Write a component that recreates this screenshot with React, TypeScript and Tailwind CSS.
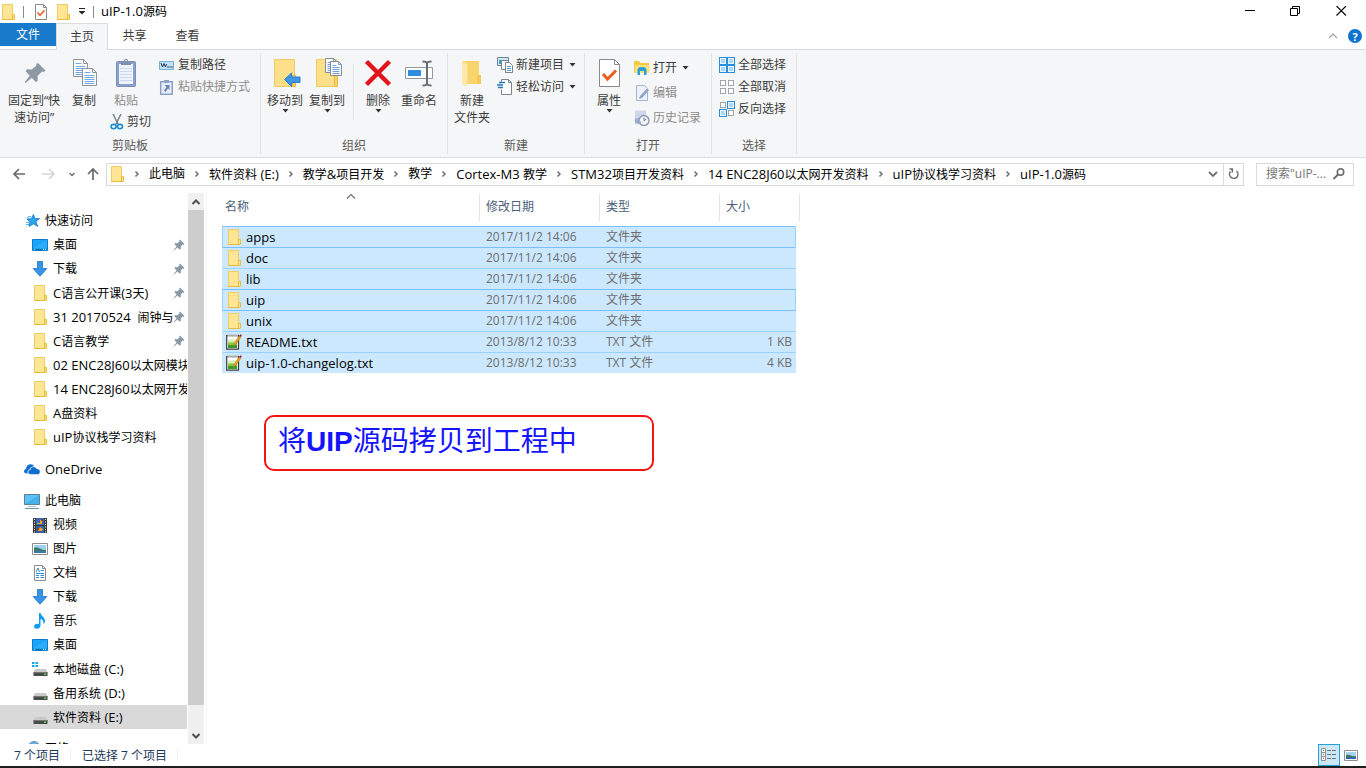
import React, { type ReactNode } from "react";

/* ---------- text ---------- */

// Latin runs are set one pixel larger than the Chinese text around them.
function Mixed({ children }: { children: string }) {
  const runs = children.match(/[\x20-\x7e]+|[^\x20-\x7e]+/g) ?? [];
  return (
    <span className="whitespace-pre">
      {runs.map((run, i) =>
        /^[\x20-\x7e]/.test(run) ? (
          <span key={i} className="text-[13px]">{run}</span>
        ) : (
          run
        ),
      )}
    </span>
  );
}

/* ---------- icons ---------- */

function Svg({ w, h, children }: { w: number; h: number; children: ReactNode }) {
  return (
    <svg width={w} height={h} viewBox={`0 0 ${w} ${h}`} className="shrink-0" aria-hidden="true">
      {children}
    </svg>
  );
}

const FolderIcon = () => (
  <Svg w={16} h={16}>
    <path d="M2 .5h11v9.500l1.500.5v5H2z" fill="#ffe594" />
    <path d="M2.500 15.500V.5h10v9.500" fill="none" stroke="#f0cd62" />
    <path d="M2 15.500h12M12.500 15v-4.500h2v5" fill="none" stroke="#e9bb3d" />
  </Svg>
);

const PinSmall = () => (
  <Svg w={12} h={12}>
    <path d="M7 .5 11.500 5l-1 .8-.8-.3-2 2 .2 2-1 1.200L4.600 8.400.8 11.600l-.4-.4 3.200-3.800-2.300-2.300 1.200-1 2 .2 2-2-.3-.8z" fill="#8b98a4" />
  </Svg>
);

const StarIcon = () => (
  <Svg w={16} h={16}>
    <path d="m9.500 1.500 1.300 4.200 4.700-.2-3.600 3 1.800 5-4.200-2.700L5 13.500l1-4.500-3-3 4.200-.2z" fill="#2ba6ee" stroke="#1580c4" strokeWidth=".9" />
    <path d="M4 3.500h3M2.500 5H5M2 9.500h3M2 11.500h3" stroke="#52b5ee" />
  </Svg>
);

const DesktopIcon = () => (
  <Svg w={16} h={16}>
    <path d="M.5 2.500h15v11H.5z" fill="#1ba4fb" stroke="#0a7dcb" />
    <path d="m1 11 14-8v8z" fill="#3cb4ff" opacity=".5" />
    <path d="M1 12.500h14" stroke="#0570b5" />
    <path d="M2 12.500h1M11 12.500h1M13 12.500h1" stroke="#fff" />
  </Svg>
);

const DownloadIcon = () => (
  <Svg w={16} h={16}>
    <path d="M5.500.5h5v7h4.300L8 15.300 1.200 7.500h4.300z" fill="#3a94e6" stroke="#2a7cc9" strokeWidth=".9" />
  </Svg>
);

const OneDriveIcon = () => (
  <Svg w={16} h={16}>
    <path d="M3.600 12.500H2.500C.8 12.500 0 11.400 0 10.200c0-1.300 1-2.200 2-2.300C2.200 5 4.300 3.300 6.600 3.300c1.800 0 3 .9 3.700 2-2.300-.2-4 1.200-4.400 3C4.200 8.500 3 10.400 3.600 12.500z" fill="#0f6fd0" />
    <path d="M6.500 13.300c-1.500 0-2.300-1-2.300-2.200 0-1.200.9-2.100 2.200-2.200.1-1.900 1.600-3 3.200-3 1.400 0 2.500.8 3 2.100 1.900-.2 3.300 1 3.300 2.700 0 1.500-1 2.600-2.500 2.600z" fill="#0f6fd0" />
  </Svg>
);

const PcIcon = () => (
  <Svg w={16} h={16}>
    <path d="M.5 1.500h15v10H.5z" fill="#5dc2f5" stroke="#5a7f98" />
    <path d="m1 11 14-9v9z" fill="#33a6e8" opacity=".6" />
    <path d="M4 13.500h8" stroke="#b5cad8" />
    <path d="M1 15.500h14" stroke="#7694a8" />
  </Svg>
);

const VideoIcon = () => (
  <Svg w={16} h={16}>
    <path d="M1 1h14v15H1z" fill="#3b3b3b" />
    <path d="M4 1h8v7H4z" fill="#3968b8" />
    <path d="M4 9h8v7H4z" fill="#345da6" />
    <path d="M5 6h3V3h2v4H5zM6 14l2-4 3 2-1 2z" fill="#e8a926" />
    <path d="M9 2h2v2H9zM5 11h2v2H5z" fill="#a33b22" />
    <path d="M2.500 2v14M13.500 2v14" stroke="#fff" strokeDasharray="1 1.500" />
  </Svg>
);

const PictureIcon = () => (
  <Svg w={16} h={16}>
    <path d="M.5 2.500h15v11H.5z" fill="#fff" stroke="#8c8c8c" />
    <path d="M2 4h12v8H2z" fill="#9bd0f3" />
    <path d="M2 7c3-1 5 0 7 1s3 1 5 1v3H2z" fill="#3c7968" />
    <path d="M2 10h12v2H2z" fill="#3b78ab" />
  </Svg>
);

const DocumentIcon = () => (
  <Svg w={16} h={16}>
    <path d="M2.500.5h8l3 3v12h-11z" fill="#fff" stroke="#8d8d8d" />
    <path d="M10.500.5v3h3" fill="none" stroke="#8d8d8d" />
    <path d="m4 7 2-4 1.500 4M8.500 5.500H12M4 8.500h8M4 10.500h3M4 12.500h3M8.500 10.500H12M8.500 12.500H12" fill="none" stroke="#2b8bd6" />
  </Svg>
);

const MusicIcon = () => (
  <Svg w={16} h={16}>
    <path d="M7 0h1.500c.5 3 4.500 4 4.500 8 0 1.500-.7 2.500-1.500 3.200.5-3-1-4.700-3-5.200v6.500c0 2-1.800 3.300-3.700 3.300C3 15.800 2 15 2 13.600 2 12 3.700 10.800 5.500 10.800c.6 0 1 .1 1.500.3z" fill="#129df3" />
  </Svg>
);

const DriveIcon = ({ system = false }: { system?: boolean }) => (
  <Svg w={16} h={16}>
    <path d="m3 8 11 0 1.500 3h-14z" fill="#c9c9c9" />
    <path d="M1.500 11h14v4h-14z" fill="#4a4a4a" />
    <path d="M1.500 11.500h14" stroke="#777" />
    <path d="M12 12.500h2v1.500h-2z" fill="#43e04d" />
    {system && <path d="M0 1h2.500v2H0zM3.500 1H6v2H3.500zM0 4h2.500v2H0zM3.500 4H6v2H3.500z" fill="#12a8e6" />}
  </Svg>
);

const NetworkIcon = () => (
  <Svg w={16} h={16}>
    <circle cx="10" cy="6" r="5.500" fill="#62aede" stroke="#6f93ab" />
    <path d="M.5 6.500h9v6h-9z" fill="#58bdf2" stroke="#5a7f98" />
  </Svg>
);

const TextFileIcon = () => (
  <Svg w={16} h={16}>
    <path d="M.7 1.700h11.800v13.500H.7z" fill="#fff" stroke="#3b3b3b" strokeWidth="1.200" />
    <path d="M2 5.500h9v4.500H2z" fill="#d5efb4" />
    <path d="M2 8.500h9V12H2z" fill="#84c944" />
    <path d="M2 11h9v3H2z" fill="#3d9a2c" />
    <path d="M1.500 1.500h10.500" stroke="#fff" strokeWidth="2.500" />
    <path d="M1.500 1.500h10.500" stroke="#555" strokeWidth="2" strokeDasharray="1 1" />
    <path d="m7.500 12 .6-2.600 5-7.400 1.700 1.200-5 7.300z" fill="#f0a51f" stroke="#a56a11" strokeWidth=".5" />
    <path d="m13.200 1.800 1-1.500 1.700 1.200-1 1.500z" fill="#a3202a" />
  </Svg>
);

const CheckPage = () => (
  <Svg w={14} h={16}>
    <path d="M1.500.5h8l3 3v12h-11z" fill="#fff" stroke="#8a8a8a" />
    <path d="M9.500.5v3h3" fill="none" stroke="#8a8a8a" />
    <path d="m3.500 8.500 2.500 2.800 4.500-5" fill="none" stroke="#e8622c" strokeWidth="1.700" />
  </Svg>
);

const Chevron = ({ d, stroke = "#707070", sw = 1.5 }: { d: string; stroke?: string; sw?: number }) => (
  <Svg w={12} h={12}>
    <path d={d} fill="none" stroke={stroke} strokeWidth={sw} />
  </Svg>
);

const Caret = () => (
  <Svg w={7} h={4}>
    <path d="M.5 0h6l-3 3.500z" fill="#333" />
  </Svg>
);

const PinLarge = () => (
  <Svg w={28} h={30}>
    <path d="m18 5 7.500 7.500-1.800 1.400-1.700-.5-4.500 4.500.3 4.500-1.800 1.800-4.300-4.400L5.500 25l-.8-.8 5-6.500L5.500 13l1.800-1.700 4.500.3 4.700-4.200-.4-1.200z" fill="#8d98a2" />
  </Svg>
);

function PageLines({ x, y }: { x: number; y: number }) {
  return (
    <g transform={`translate(${x} ${y})`}>
      <path d="M.5.5h10l4 4v13H.5z" fill="#fff" stroke="#8a929a" />
      <path d="M10.500.5v4h4" fill="none" stroke="#8a929a" />
      <path d="M2.500 4.500h6M2.500 7.500h10M2.500 9.500h10M2.500 11.500h10M2.500 13.500h10M2.500 15.500h10" stroke="#74a8e6" />
    </g>
  );
}

const CopyIcon = () => (
  <Svg w={28} h={30}>
    <PageLines x={3} y={1} />
    <PageLines x={12} y={10} />
  </Svg>
);

const PasteIcon = () => (
  <Svg w={28} h={30}>
    <rect x="4.500" y="3.500" width="19" height="25" rx="1" fill="#8ba0c9" stroke="#7d90ba" />
    <path d="M7 6h14v20H7z" fill="#eef3fc" />
    <path d="M8 10.500h12M8 13.500h12M8 16.500h12M8 19.500h12M8 22.500h12" stroke="#ccd8ee" />
    <path d="M9 3h3c0-3 4-3 4 0h3v4H9z" fill="#8090b0" />
    <path d="M13 2.500h2" stroke="#eef3fc" />
  </Svg>
);

const CutIcon = () => (
  <Svg w={14} h={16}>
    <path d="M3 0 8.300 10.500M11 0 5.700 10.500" stroke="#79838b" strokeWidth="1.500" />
    <ellipse cx="3.600" cy="12.600" rx="2.500" ry="2.200" fill="none" stroke="#188bd6" strokeWidth="1.600" />
    <ellipse cx="10" cy="12.600" rx="2.500" ry="2.200" fill="none" stroke="#188bd6" strokeWidth="1.600" />
  </Svg>
);

const CopyPathIcon = () => (
  <Svg w={16} h={16}>
    <path d="M.5 4.500h14v8H.5z" fill="#bfe1f6" stroke="#7ab0d4" />
    <path d="m2 6 1.500 4L5 6.500 6.500 10 7.500 7" fill="none" stroke="#1e3a52" />
    <path d="M8.500 10h1M10.500 10h1M12.500 10h1" stroke="#1e3a52" strokeWidth="1.300" />
  </Svg>
);

const PasteShortcutIcon = () => (
  <Svg w={16} h={16}>
    <path d="M1.700 2.700h11.500v12.600H1.700z" fill="#e9effa" stroke="#8c9fc4" strokeWidth="1.500" />
    <path d="M5 1h5v3H5z" fill="#8c9fc4" />
    <path d="M5.500 6h5v5L9 9.500 6.500 13 5 11.500l2.500-3.500z" fill="#6d82b0" />
  </Svg>
);

const BigFolder = () => (
  <>
    <path d="M4.500 1.500h20v27h-20z" fill="#ffe08a" stroke="#eecb66" />
    <path d="M22.500 17.500h3v11h-3z" fill="#fbd25d" stroke="#e5b94a" />
  </>
);

const MoveToIcon = () => (
  <Svg w={34} h={30}>
    <g transform="translate(2 0)"><BigFolder /></g>
    <path d="m16.500 21.500 7-6.500v4h8.500v5.500h-8.500v4z" fill="#3f97e3" stroke="#2d7fc9" />
  </Svg>
);

const CopyToIcon = () => (
  <Svg w={34} h={30}>
    <g transform="translate(2 0)"><BigFolder /></g>
    {[[15, 0], [20, 3]].map(([x, y]) => (
      <g key={x} transform={`translate(${x} ${y})`}>
        <path d="M.5.500h8l3 3v11H.5z" fill="#fff" stroke="#838b93" />
        <path d="M8.500.5v3h3M2.500 4.500h4M2.500 6.500h7M2.500 8.500h7M2.500 10.500h7M2.500 12.500h7" fill="none" stroke="#6a9fd8" />
      </g>
    ))}
  </Svg>
);

const DeleteIcon = () => (
  <Svg w={28} h={30}>
    <path d="m2.500 3.500 23 23M25.500 3.500l-23 23" stroke="#e1141c" strokeWidth="4.500" />
  </Svg>
);

const RenameIcon = () => (
  <Svg w={34} h={30}>
    <path d="M3.500 9.500h27v11h-27z" fill="#fff" stroke="#929a9f" />
    <path d="M6 12h13v6H6z" fill="#2f8de0" />
    <path d="M25 4v23" stroke="#676d72" strokeWidth="2" />
    <path d="M20.500 3.500c3 0 4.500.5 4.500 2 0-1.500 1.500-2 4.500-2M20.500 27.500c3 0 4.500-.5 4.500-2 0 1.500 1.500 2 4.500 2" fill="none" stroke="#676d72" strokeWidth="2" />
  </Svg>
);

const NewFolderIcon = () => (
  <Svg w={28} h={30}>
    <path d="M4 3h17v14l2 1.500V26H4z" fill="#f9d36c" />
    <path d="m4 3 5.500 3v20L8 29l-4-3z" fill="#ffe9a8" />
    <path d="M19 17h4v9h-4z" fill="#f3c957" />
  </Svg>
);

const NewItemIcon = () => (
  <Svg w={16} h={16}>
    <path d="M.5.500h11v8H.5z" fill="#cfe8f6" stroke="#6c8796" />
    <path d="M2 3h4v4H2z" fill="#3b9fd1" />
    <path d="M4.500 3.500h7v9h-7z" fill="#fff" stroke="#7b858c" />
    <path d="M8.500 5.500h4l3 3v7h-7z" fill="#fff" stroke="#7b858c" />
    <path d="M10 9.500h4M10 11.500h4M10 13.500h4" stroke="#5c9bd8" />
  </Svg>
);

const EasyAccessIcon = () => (
  <Svg w={16} h={16}>
    <path d="M4.500 2.500V.5h7l3 3v12h-10v-5" fill="#fff" stroke="#7d868d" />
    <path d="M11.500.5v3h3" fill="none" stroke="#7d868d" />
    <path d="M2 3.500h6M0 6h6M1 8.500h5" stroke="#2577be" strokeWidth="1.300" />
  </Svg>
);

const PropertiesIcon = () => (
  <Svg w={28} h={30}>
    <path d="M4.500 1.500h15l5 5v22h-20z" fill="#fff" stroke="#8a8a8a" />
    <path d="M19.500 1.500v5h5" fill="none" stroke="#8a8a8a" />
    <path d="m8 16 4.500 5L21 12.500" fill="none" stroke="#f05c1e" strokeWidth="3" />
  </Svg>
);

const OpenIcon = () => (
  <Svg w={16} h={16}>
    <path d="M0 1h5l1.500 2H15v10H0z" fill="#f5c842" />
    <path d="M1.500 5h14v8h-15z" fill="#ffe07a" />
    <path d="M3.500 15V10.500c0-3 2-3.500 4.500-3.500s4.500.5 4.500 3.500V15H10v-4H6v4z" fill="#27a2dc" />
  </Svg>
);

const EditIcon = () => (
  <Svg w={16} h={16}>
    <path d="M2.500.5h8l3 3v12h-11z" fill="#edf1f9" stroke="#a7b3cf" />
    <path d="M5 14 6 11l7-7.500 2 1.800L8 13z" fill="#93a3c8" />
  </Svg>
);

const HistoryIcon = () => (
  <Svg w={16} h={16}>
    <path d="M1 .5h11v14H1z" fill="#cfd8ea" />
    <path d="M1 8h5v5H1z" fill="#aab9d7" />
    <circle cx="10" cy="10.500" r="5" fill="#f0f3f8" stroke="#8d99b4" strokeWidth="1.400" />
    <path d="M10 7.500v3.200l2.200-1.500" fill="none" stroke="#707d9c" />
    <path d="M1 9.500 4 13l3-1" fill="none" stroke="#94a3c4" strokeWidth="1.500" />
  </Svg>
);

function Squares({ on }: { on: boolean[] }) {
  return (
    <Svg w={16} h={16}>
      {on.map((active, i) => {
        const x = (i % 2) * 8;
        const y = Math.floor(i / 2) * 8;
        return active ? (
          <g key={i}>
            <rect x={x + 0.5} y={y + 0.5} width="7" height="7" fill="#eaf6ff" stroke="#2b8fdd" />
            <rect x={x + 2} y={y + 2} width="4" height="4" fill="#a9d8fa" />
          </g>
        ) : (
          <rect key={i} x={x + 1.5} y={y + 1.5} width="5" height="5" fill="#fff" stroke="#a5a5a5" />
        );
      })}
    </Svg>
  );
}

/* ---------- ribbon ---------- */

function BigButton({ icon, lines, width, arrow, disabled }: { icon: ReactNode; lines: string[]; width: string; arrow?: boolean; disabled?: boolean }) {
  return (
    <button type="button" disabled={disabled} className={`flex shrink-0 flex-col items-center pt-[5px] ${width} ${disabled ? "text-[#8d8d8d]" : "text-[#3c3c3c]"}`}>
      {icon}
      <span className="mt-1 flex flex-col items-center leading-[17px]">
        {lines.map((l) => <span key={l} className="whitespace-nowrap">{l}</span>)}
      </span>
      {arrow && <Caret />}
    </button>
  );
}

function SmallButton({ icon, label, arrow, disabled }: { icon: ReactNode; label: string; arrow?: boolean; disabled?: boolean }) {
  return (
    <button type="button" disabled={disabled} className={`flex h-[22px] items-center gap-[3px] whitespace-nowrap ${disabled ? "text-[#8d8d8d]" : "text-[#3c3c3c]"}`}>
      {icon}
      <span>{label}</span>
      {arrow && <span className="ml-[2px]"><Caret /></span>}
    </button>
  );
}

function Group({ label, width, children }: { label: string; width: string; children: ReactNode }) {
  return (
    <section aria-label={label} className={`my-[3px] flex shrink-0 flex-col border-r border-[#e1e2e4] ${width}`}>
      <div className="flex flex-1 items-start">{children}</div>
      <div className="h-4 text-center leading-4 text-[#5a5a5a]">{label}</div>
    </section>
  );
}

function Ribbon() {
  return (
    <div className="flex h-[108px] shrink-0 border-b border-[#dadbdc] bg-[#f5f6f7]">
      <Group label="剪贴板" width="w-[261px]">
        <BigButton width="w-[68px]" icon={<PinLarge />} lines={["固定到“快", "速访问”"]} />
        <BigButton width="w-8" icon={<CopyIcon />} lines={["复制"]} />
        <div className="ml-[10px] flex w-[44px] flex-col gap-[2px]">
          <BigButton width="w-8" icon={<PasteIcon />} lines={["粘贴"]} disabled />
          <SmallButton icon={<CutIcon />} label="剪切" />
        </div>
        <div className="ml-[5px] mt-px flex flex-col">
          <SmallButton icon={<CopyPathIcon />} label="复制路径" />
          <SmallButton icon={<PasteShortcutIcon />} label="粘贴快捷方式" disabled />
        </div>
      </Group>
      <Group label="组织" width="w-[187px]">
        <BigButton width="ml-[3px] w-[42px]" icon={<MoveToIcon />} lines={["移动到"]} arrow />
        <BigButton width="w-[42px]" icon={<CopyToIcon />} lines={["复制到"]} arrow />
        <div className="mx-[5px] mt-[11px] h-14 w-px bg-[#e1e2e4]" />
        <BigButton width="w-[38px]" icon={<DeleteIcon />} lines={["删除"]} arrow />
        <BigButton width="w-[44px]" icon={<RenameIcon />} lines={["重命名"]} />
      </Group>
      <Group label="新建" width="w-[137px]">
        <BigButton width="w-12" icon={<NewFolderIcon />} lines={["新建", "文件夹"]} />
        <div className="ml-px mt-px flex flex-col">
          <SmallButton icon={<NewItemIcon />} label="新建项目" arrow />
          <SmallButton icon={<EasyAccessIcon />} label="轻松访问" arrow />
        </div>
      </Group>
      <Group label="打开" width="w-[127px]">
        <BigButton width="w-12" icon={<PropertiesIcon />} lines={["属性"]} arrow />
        <div className="ml-px mt-1 flex flex-col gap-[3px]">
          <SmallButton icon={<OpenIcon />} label="打开" arrow />
          <SmallButton icon={<EditIcon />} label="编辑" disabled />
          <SmallButton icon={<HistoryIcon />} label="历史记录" disabled />
        </div>
      </Group>
      <Group label="选择" width="w-[85px]">
        <div className="ml-[7px] mt-px flex flex-col">
          <SmallButton icon={<Squares on={[true, true, true, true]} />} label="全部选择" />
          <SmallButton icon={<Squares on={[false, false, false, false]} />} label="全部取消" />
          <SmallButton icon={<Squares on={[false, true, true, false]} />} label="反向选择" />
        </div>
      </Group>
    </div>
  );
}

/* ---------- window chrome ---------- */

function TitleBar() {
  return (
    <header className="flex h-[23px] shrink-0 items-center justify-between">
      <div className="flex items-center">
        <FolderIcon />
        <span className="ml-[7px] h-3 w-px bg-[#8a8a8a]" />
        <button type="button" aria-label="属性" className="ml-[10px]"><CheckPage /></button>
        <button type="button" aria-label="新建文件夹" className="ml-[7px]"><FolderIcon /></button>
        <button type="button" aria-label="自定义快速访问工具栏" className="ml-[7px]">
          <Svg w={8} h={7}><path d="M1 .5h6" stroke="#222" /><path d="M.5 3h7L4 6.500z" fill="#222" /></Svg>
        </button>
        <span className="ml-[7px] h-3 w-px bg-[#8a8a8a]" />
        <h1 className="ml-[7px]"><Mixed>uIP-1.0源码</Mixed></h1>
      </div>
      <div className="flex self-stretch pr-[2px]">
        <button type="button" aria-label="最小化" className="flex w-[46px] items-center justify-center">
          <Svg w={11} h={11}><path d="M1 4.500h10" stroke="#000" /></Svg>
        </button>
        <button type="button" aria-label="向下还原" className="flex w-[46px] items-center justify-center">
          <Svg w={11} h={11}><path d="M.5 2.500h7v7h-7zM2.500 2.500v-2h7v7h-2" fill="none" stroke="#000" /></Svg>
        </button>
        <button type="button" aria-label="关闭" className="flex w-[46px] items-center justify-center">
          <Svg w={11} h={11}><path d="m.5 0 9.500 9.500M10 0 .5 9.500" stroke="#000" strokeWidth="1.100" /></Svg>
        </button>
      </div>
    </header>
  );
}

function TabRow() {
  return (
    <div className="flex h-[27px] shrink-0 border-b border-[#dadbdc] text-[#3c3c3c]">
      <button type="button" className="h-[23px] w-14 bg-[#1979ca] text-white">文件</button>
      <button type="button" className="-mb-px w-[52px] border-x border-t border-[#dadbdc] bg-[#f5f6f7]">主页</button>
      <button type="button" className="h-[25px] w-[53px]">共享</button>
      <button type="button" className="h-[25px] w-[53px]">查看</button>
      <div className="ml-auto flex h-[26px] items-center gap-[9px] pr-1">
        <button type="button" aria-label="最小化功能区"><Chevron d="m2 8 4-4 4 4" stroke="#a0a0a0" sw={1.2} /></button>
        <button type="button" aria-label="帮助" className="flex size-[14px] items-center justify-center rounded-full bg-[#0f74d0] text-[11px] font-bold leading-none text-white">?</button>
      </div>
    </div>
  );
}

const crumbs = ["此电脑", "软件资料 (E:)", "教学&项目开发", "教学", "Cortex-M3 教学", "STM32项目开发资料", "14 ENC28J60以太网开发资料", "uIP协议栈学习资料", "uIP-1.0源码"];

function AddressRow() {
  return (
    <div className="flex h-8 shrink-0 items-center pr-3">
      <button type="button" aria-label="后退" className="ml-3">
        <Svg w={14} h={14}><path d="M13 7H2m5-5L2 7l5 5" fill="none" stroke="#6a6a6a" strokeWidth="1.700" /></Svg>
      </button>
      <button type="button" aria-label="前进" className="ml-4" disabled>
        <Svg w={14} h={14}><path d="M0 7h12M7 2l5 5-5 5" fill="none" stroke="#d6d6d6" strokeWidth="1.700" /></Svg>
      </button>
      <button type="button" aria-label="最近浏览的位置" className="ml-[10px]"><Chevron d="M3.500 5 6 7.500 8.500 5" /></button>
      <button type="button" aria-label="上移" className="ml-2">
        <Svg w={14} h={14}><path d="M7 13V2M2 7l5-5 5 5" fill="none" stroke="#6a6a6a" strokeWidth="1.700" /></Svg>
      </button>
      <div className="ml-[6px] flex h-[23px] min-w-0 flex-1 items-center border border-[#d9d9d9] pl-[2px]">
        <FolderIcon />
        <nav aria-label="地址" className="flex min-w-0 flex-1 items-center whitespace-nowrap">
          {crumbs.map((c) => (
            <span key={c} className="flex items-center">
              <span className="flex w-6 justify-center"><Chevron d="m4.500 3.500 2.500 2.500L4.500 8.500" /></span>
              <a href="#" className="text-black"><Mixed>{c}</Mixed></a>
            </span>
          ))}
        </nav>
        <button type="button" aria-label="以前的位置" className="flex w-5 justify-center"><Chevron d="m2 4 4 4 4-4" sw={1.8} /></button>
        <button type="button" aria-label="刷新" className="flex w-5 items-center justify-center self-stretch border-l border-[#d9d9d9]">
          <Svg w={12} h={12}><path d="M2.500 3.500A4.200 4.200 0 1 0 8.500 3M1.500 1h2.800v3.500" fill="none" stroke="#6a6a6a" strokeWidth="1.500" /></Svg>
        </button>
      </div>
      <label className="ml-3 flex h-[23px] w-[98px] items-center border border-[#d9d9d9] pl-[9px]">
        <input aria-label="搜索" placeholder={'搜索"uIP-...'} className="w-[66px] bg-transparent outline-none placeholder:text-[#767676]" />
        <Svg w={14} h={14}><circle cx="8.500" cy="5" r="3.200" fill="none" stroke="#6a6a6a" strokeWidth="1.600" /><path d="m6 7.500-4.500 4.500" stroke="#6a6a6a" strokeWidth="1.800" /></Svg>
      </label>
    </div>
  );
}

/* ---------- navigation pane ---------- */

type NavItem = { label: string; icon: ReactNode; pinned?: boolean; active?: boolean };

const sections: { head: NavItem; items: NavItem[] }[] = [
  {
    head: { label: "快速访问", icon: <StarIcon /> },
    items: [
      { label: "桌面", icon: <DesktopIcon />, pinned: true },
      { label: "下载", icon: <DownloadIcon />, pinned: true },
      { label: "C语言公开课(3天)", icon: <FolderIcon />, pinned: true },
      { label: "31 20170524  闹钟与", icon: <FolderIcon />, pinned: true },
      { label: "C语言教学", icon: <FolderIcon />, pinned: true },
      { label: "02 ENC28J60以太网模块", icon: <FolderIcon /> },
      { label: "14 ENC28J60以太网开发", icon: <FolderIcon /> },
      { label: "A盘资料", icon: <FolderIcon /> },
      { label: "uIP协议栈学习资料", icon: <FolderIcon /> },
    ],
  },
  { head: { label: "OneDrive", icon: <OneDriveIcon /> }, items: [] },
  {
    head: { label: "此电脑", icon: <PcIcon /> },
    items: [
      { label: "视频", icon: <VideoIcon /> },
      { label: "图片", icon: <PictureIcon /> },
      { label: "文档", icon: <DocumentIcon /> },
      { label: "下载", icon: <DownloadIcon /> },
      { label: "音乐", icon: <MusicIcon /> },
      { label: "桌面", icon: <DesktopIcon /> },
      { label: "本地磁盘 (C:)", icon: <DriveIcon system /> },
      { label: "备用系统 (D:)", icon: <DriveIcon /> },
      { label: "软件资料 (E:)", icon: <DriveIcon />, active: true },
    ],
  },
  { head: { label: "网络", icon: <NetworkIcon /> }, items: [] },
];

function NavRow({ item, child }: { item: NavItem; child?: boolean }) {
  return (
    <a href="#" className={`flex h-6 items-center gap-[5px] text-black ${child ? "pl-8" : "pl-6"} ${item.active ? "bg-[#d9d9d9]" : ""}`}>
      {item.icon}
      <span className="min-w-0 flex-1"><Mixed>{item.label}</Mixed></span>
      {item.pinned && <span className="mr-[2px] shrink-0"><PinSmall /></span>}
    </a>
  );
}

function NavPane() {
  return (
    <aside className="flex w-[207px] shrink-0 border-r border-[#f5f5f5]">
      <nav aria-label="导航窗格" className="flex w-[187px] flex-col gap-2 overflow-hidden pt-[19px]">
        {sections.map((s) => (
          <div key={s.head.label} className="shrink-0">
            <NavRow item={s.head} />
            {s.items.map((it) => <NavRow key={it.label} item={it} child />)}
          </div>
        ))}
      </nav>
      <div className="ml-px mt-[3px] flex w-4 flex-col bg-[#f0f0f0]">
        <button type="button" aria-label="向上滚动" className="flex h-[17px] items-center justify-center"><Chevron d="m2.500 8 3.500-3.500L9.500 8" stroke="#505050" sw={2} /></button>
        <div className="flex-1 bg-[#cdcdcd]" />
        <div className="h-[22px]" />
        <button type="button" aria-label="向下滚动" className="flex h-[17px] items-center justify-center"><Chevron d="M2.500 4 6 7.500 9.500 4" stroke="#505050" sw={2} /></button>
      </div>
    </aside>
  );
}

/* ---------- file list ---------- */

type FileRow = { name: string; date: string; type: string; size?: string; outlined?: boolean };

const files: FileRow[] = [
  { name: "apps", date: "2017/11/2 14:06", type: "文件夹", outlined: true },
  { name: "doc", date: "2017/11/2 14:06", type: "文件夹" },
  { name: "lib", date: "2017/11/2 14:06", type: "文件夹" },
  { name: "uip", date: "2017/11/2 14:06", type: "文件夹", outlined: true },
  { name: "unix", date: "2017/11/2 14:06", type: "文件夹" },
  { name: "README.txt", date: "2013/8/12 10:33", type: "TXT 文件", size: "1 KB" },
  { name: "uip-1.0-changelog.txt", date: "2013/8/12 10:33", type: "TXT 文件", size: "4 KB" },
];

function FileTable() {
  return (
    <table className="w-[578px] table-fixed border-separate border-spacing-0">
      <colgroup>
        <col className="w-[258px]" />
        <col className="w-[120px]" />
        <col className="w-[120px]" />
        <col className="w-[76px]" />
        <col className="w-1" />
      </colgroup>
      <thead>
        <tr className="text-left text-[#4c607a]">
          <th className="relative h-7 border-r border-[#e5e5e5] pl-[3px] font-normal">
            名称
            <span className="absolute left-1/2 top-0 -translate-x-1/2"><Chevron d="m2 5.500 4-4 4 4" stroke="#6d6d6d" sw={1.1} /></span>
          </th>
          <th className="border-r border-[#e5e5e5] pl-[6px] font-normal">修改日期</th>
          <th className="border-r border-[#e5e5e5] pl-[6px] font-normal">类型</th>
          <th className="pl-[6px] font-normal">大小</th>
          <td className="border-r border-[#e5e5e5]" />
        </tr>
      </thead>
      <tbody>
        <tr><td colSpan={5} className="h-[5px]" /></tr>
        {files.map((f, i) => {
          const strong = f.outlined || files[i - 1]?.outlined;
          const top = strong ? "border-t border-t-[#7abfff]" : "border-t border-t-[#99d1ff]";
          const cell = `h-[21px] bg-[#cce8ff] ${top}`;
          return (
            <tr key={f.name} className="text-[#6d6d6d]">
              <td className={`${cell} border-l ${f.outlined ? "border-l-[#99d1ff]" : "border-l-[#cce8ff]"}`}>
                <span className="flex h-5 items-center gap-1 pl-[3px] text-[13px] text-black">
                  {f.size ? <TextFileIcon /> : <FolderIcon />}
                  {f.name}
                </span>
              </td>
              <td className={`${cell} pl-[6px]`}>{f.date}</td>
              <td className={`${cell} pl-[6px]`}>{f.type}</td>
              <td className={`${cell} border-r pr-[3px] text-right ${f.outlined ? "border-r-[#99d1ff]" : "border-r-[#cce8ff]"}`}>{f.size}</td>
              <td />
            </tr>
          );
        })}
      </tbody>
    </table>
  );
}

/* ---------- status bar ---------- */

function StatusBar() {
  return (
    <footer className="flex h-6 shrink-0 items-center border-b-2 border-[#1f1f1f] bg-white pl-[14px] text-[#1e395b]">
      <span className="leading-[18px] pt-[2px]">7 个项目</span>
      <span className="ml-[10px] h-3 w-px bg-[#f0f0f0]" />
      <span className="ml-[11px] leading-[18px] pt-[2px]">已选择 7 个项目</span>
      <span className="ml-[10px] h-3 w-px bg-[#f0f0f0]" />
      <div className="ml-auto flex items-center self-stretch pr-2">
        <button type="button" aria-label="详细信息" className="flex w-[22px] items-center justify-center self-stretch border border-[#26a0da] bg-[#cce8f6]">
          <Svg w={16} h={14}>
            <path d="M.5.5h4v4h-4zM.5 4.500h4v4h-4zM.5 8.500h4v4h-4z" fill="#fff" stroke="#909090" />
            <path d="M6 2.500h4M11 2.500h4M6 6.500h4M11 6.500h4M6 10.500h4M11 10.500h4" stroke="#777" />
            <path d="M2 2h1v1H2z" fill="#3b9b3b" />
            <path d="M2 6h1v1H2z" fill="#2b7fd0" />
            <path d="M2 10h1v1H2z" fill="#d03030" />
          </Svg>
        </button>
        <button type="button" aria-label="大缩略图" className="ml-1">
          <Svg w={14} h={11}>
            <path d="M.5.5h13v10H.5z" fill="#fff" stroke="#909090" />
            <path d="M2 2h10v7H2z" fill="#a8d4f2" />
            <path d="M2 5c4-1 6 2 10 1v3H2z" fill="#3c7968" />
            <path d="M2 7.500h10V9H2z" fill="#2b65b8" />
          </Svg>
        </button>
      </div>
    </footer>
  );
}

export default function App() {
  return (
    <div className="flex h-screen flex-col overflow-hidden bg-white font-['Open_Sans','Noto_Sans_CJK_SC',sans-serif] text-[12px] leading-4 text-black">
      <TitleBar />
      <TabRow />
      <Ribbon />
      <AddressRow />
      <div className="flex min-h-0 flex-1">
        <NavPane />
        <main className="min-w-0 flex-1 overflow-hidden pl-[15px] pt-[3px]">
          <FileTable />
          <p className="ml-[42px] mt-[42px] h-14 w-[390px] rounded-[10px] border-2 border-[#f51414] pl-3 font-['Liberation_Sans','Noto_Sans_CJK_SC',sans-serif] text-[28px] leading-[50px] text-[#1414ff]">
            将<b>UIP</b>源码拷贝到工程中
          </p>
        </main>
      </div>
      <StatusBar />
    </div>
  );
}
